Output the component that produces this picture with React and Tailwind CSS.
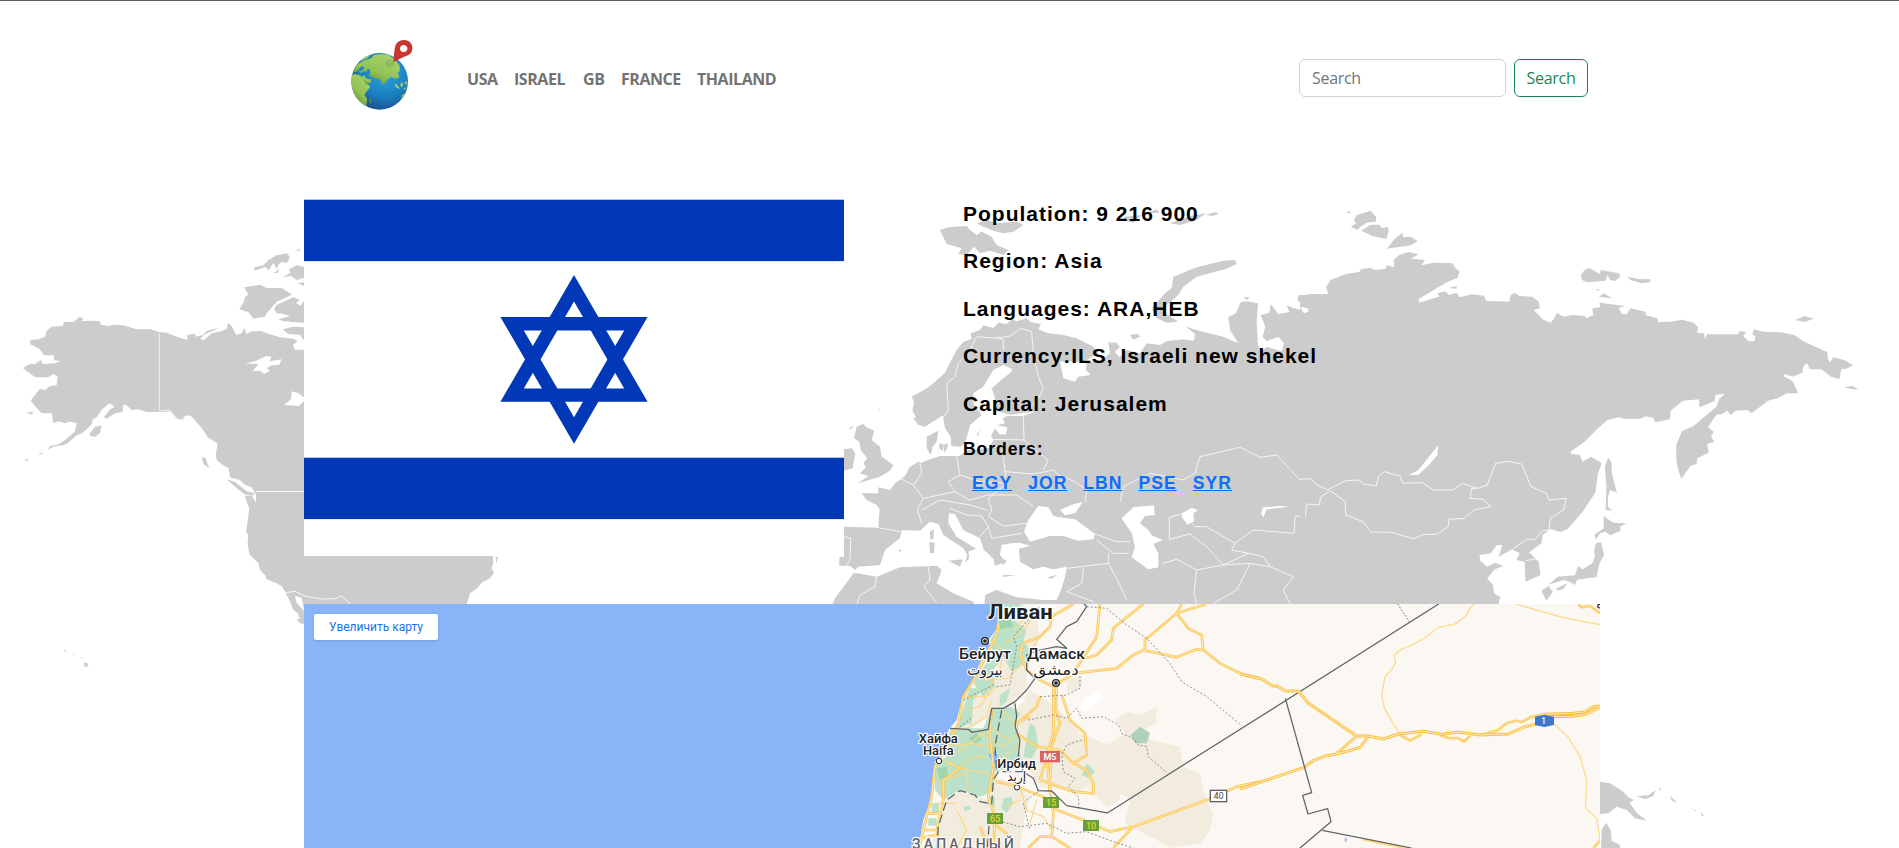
import React from "react";

const navLinks = [
  { label: "USA", width: "w-[31px]" },
  { label: "ISRAEL", width: "w-[53px]" },
  { label: "GB", width: "w-[22px]" },
  { label: "FRANCE", width: "w-[60px]" },
  { label: "THAILAND", width: "w-[82px]" },
];

const facts = [
  "Population: 9 216 900",
  "Region: Asia",
  "Languages: ARA,HEB",
  "Currency:ILS, Israeli new shekel",
  "Capital: Jerusalem",
];

const borders = ["EGY", "JOR", "LBN", "PSE", "SYR"];

function Logo() {
  return (
    <svg className="h-[70px] w-[62px]" viewBox="0 0 186 210">
      <defs>
        <radialGradient id="sea" cx="0.6" cy="0.35" r="0.7">
          <stop offset="0" stopColor="#2ba3dc" />
          <stop offset="0.6" stopColor="#1a80bf" />
          <stop offset="1" stopColor="#1c4a8c" />
        </radialGradient>
        <linearGradient id="land" x1="0.7" y1="0" x2="0.1" y2="1">
          <stop offset="0" stopColor="#a9d268" />
          <stop offset="0.5" stopColor="#93c257" />
          <stop offset="1" stopColor="#4d8a2c" />
        </linearGradient>
        <clipPath id="globe">
          <circle cx="86" cy="124" r="85" />
        </clipPath>
      </defs>
      <circle cx="86" cy="124" r="85" fill="url(#sea)" />
      <g clipPath="url(#globe)">
        <g fill="url(#land)">
          <path d="M0 106 L12 102 26 106 36 118 44 130 54 136 58 140 46 156 40 164 48 176 46 202 20 190 0 150Z" />
          <path d="M30 110 L40 106 44 114 52 118 62 118 58 128 44 132Z" />
          <path d="M6 88 L16 76 30 66 44 60 62 54 66 46 90 42 112 44 126 54 136 64 146 78 146 94 140 98 146 112 132 116 120 110 110 118 98 136 90 124 84 116 70 114 56 108 48 96 38 94 30 100 20 92 10 98Z" />
          <path d="M30 62 L46 46 62 42 50 54 36 62Z M150 182 L152 166 164 158 170 146 178 150 172 176 156 188Z" />
          <path d="M130 130 L140 136 148 148 134 142Z M148 132 L154 126 156 138 150 142Z M160 128 L168 122 166 136Z M158 144 l8 -2 -4 8Z M56 178 L61 176 60 192 56 190Z" />
        </g>
        <path d="M50 86 l6 2 2 12 -6 6 -6 -10Z M34 78 l6 4 -6 10 -14 2 6 -10Z M22 96 l10 4 -4 4 -12 0Z" fill="#1e86c6" />
        <ellipse cx="116" cy="70" rx="14" ry="12" fill="#628d42" opacity="0.25" />
      </g>
      <path
        fillRule="evenodd"
        fill="#c8352f"
        d="M127 67 C129 48 129 28 134 15 C141 0 159 -3 172 3 C186 11 187 28 179 40 C171 49 153 51 142 59Z M158 15 a11 11 0 1 0 0.1 0Z"
      />
    </svg>
  );
}

function Flag() {
  return (
    <svg className="block h-[393px] w-[540px]" viewBox="0 0 540 393">
      <rect width="540" height="393" fill="#fff" />
      <g fill="#0038b8">
        <rect y="36.7" width="540" height="61.4" />
        <rect y="294.7" width="540" height="61.4" />
        <path
          fillRule="evenodd"
          d="M270 112 L343.6 238.8 L196.4 238.8Z M270 138.6 L320.2 225.4 L219.8 225.4Z"
        />
        <path
          fillRule="evenodd"
          d="M270 280.8 L343.6 154 L196.4 154Z M270 254.2 L320.2 167.4 L219.8 167.4Z"
        />
      </g>
    </svg>
  );
}

function WorldMap() {
  return (
    <svg
      className="absolute inset-0 -z-10 h-[848px] w-[1899px]"
      viewBox="0 0 1899 848"
      fill="#ccc"
      aria-hidden="true"
    >
      {/* North America */}
      <g transform="translate(0 199) scale(.33333)">
        <path d="M90 432 L92 420 115 418 135 410 140 392 155 380 188 378 192 366 220 366 240 350 250 358 245 364 268 362 300 364 303 374 325 378 345 374 370 376 410 388 450 387 478 396 500 398 530 410 562 420 562 404 585 402 588 410 606 406 622 392 655 384 640 392 612 404 600 418 612 420 635 400 665 394 680 386 684 370 695 377 708 404 722 402 735 384 738 402 755 394 785 393 800 400 840 412 880 416 893 424 878 436 885 449 912 449 1490 449 1490 1070 1478 1060 1480 1090 1475 1105 1482 1119 1467 1137 1448 1146 1428 1168 1410 1180 1395 1230 912 1230 905 1193 885 1188 890 1208 912 1232 912 1272 900 1270 890 1258 900 1256 893 1240 880 1230 870 1204 855 1175 845 1158 830 1150 800 1138 795 1125 780 1110 775 1090 748 1062 743 1030 745 1004 738 995 745 950 748 925 740 905 735 888 755 886 768 908 768 884 755 862 735 855 720 840 690 832 686 805 668 795 650 780 648 765 652 730 625 716 605 684 572 648 555 648 548 660 530 656 510 634 480 636 440 636 415 628 395 630 380 616 370 614 368 636 345 640 320 656 312 652 328 630 344 620 328 610 305 630 290 652 278 658 276 672 258 690 245 700 230 706 205 728 190 736 165 738 143 750 150 738 178 732 210 708 225 694 230 668 205 665 195 670 175 664 160 670 155 640 125 640 105 618 92 602 105 585 120 566 135 570 150 558 170 556 173 530 160 522 145 532 105 532 88 518 68 504 90 492 105 492 122 480 128 492 165 490 180 484 162 480 162 466 132 466 118 446Z" />
        <path d="M762 202 L790 196 805 180 830 166 860 160 870 170 862 188 845 186 835 194 830 208 820 188 805 212 798 200 765 212Z M820 220 L838 206 834 218Z M848 232 L872 218 866 208 890 196 912 200 912 234 890 240 872 228Z M886 150 l12 -2 4 6Z M893 250 l19 -4 v12Z" />
        <path d="M733 262 L782 254 800 264 845 264 876 284 830 306 800 340 795 350 760 356 745 336 718 328 732 305 735 290 745 284Z M822 328 L830 314 880 292 900 300 888 308 900 318 912 302 912 368 850 364 835 358 870 348 850 342 830 340Z M848 388 L880 380 912 382 912 422 900 404 865 402Z" />
        <path d="M270 700 L285 680 305 676 300 700 285 710 270 708Z M78 636 h24 l-8 8Z M605 774 L615 772 628 804 612 794Z M680 838 L705 846 740 874 760 878 765 886 735 884 700 856Z M75 780 l12 -6 -8 12Z M115 762 l18 -6 -12 8Z M252 1386 l14 6 -6 9 -8 -2Z M190 1350 h8 v6Z M215 1362 h8 v4Z M242 1372 h5 v5Z M1487 1071 h7 l-5 20Z" />
        <g fill="#fff">
          <path d="M735 490 L765 484 800 468 815 470 808 484 845 478 838 494 815 496 800 504 810 512 792 522 780 512 758 514 775 492Z M853 614 L873 598 875 574 895 580 912 592 912 604 896 618Z M560 665 l14 8 -4 16Z M585 684 l6 12 -8 8Z M600 714 l18 12 -10 6Z M556 684 l18 20 -2 8Z M586 720 l14 18 -6 2Z" />
        </g>
        <g fill="none" stroke="#fff" strokeWidth="2.6">
          <path d="M478 398 V632 L508 630 538 662 560 646 575 650 625 714 648 728 652 750" opacity=".8" />
          <path d="M768 874.5 H912 M855 1178 L885 1174 915 1188 960 1197 1005 1196 1025 1188 1050 1212" />
        </g>
      </g>
      {/* Europe, western Asia and northern Africa */}
      <g transform="translate(830 179) scale(.33333)">
        <path d="M1500 341 L1405 346 1403 362 1432 380 1430 394 1390 384 1370 376 1378 396 1345 402 1322 372 1318 398 1292 406 1306 440 1298 470 1310 484 1345 470 1362 490 1355 514 1310 500 1296 512 1284 495 1280 430 1284 370 1250 364 1232 366 1218 400 1195 412 1200 450 1225 490 1180 470 1090 448 1065 438 1095 462 1092 482 1060 478 1010 484 990 495 950 490 930 520 890 510 868 532 855 515 870 500 860 488 835 487 840 520 810 545 770 545 768 570 782 585 745 590 735 605 700 595 690 545 760 545 805 520 790 500 740 475 700 465 655 460 625 448 633 432 602 426 590 415 560 424 545 418 530 432 505 428 490 444 460 436 450 450 422 460 425 476 400 486 380 510 360 548 345 578 330 592 300 618 282 630 245 650 253 668 247 690 258 712 250 715 265 735 285 740 325 715 338 706 345 745 362 770 364 798 390 800 405 790 415 755 420 735 455 705 430 670 430 640 460 620 490 570 520 555 548 568 540 580 520 595 485 625 495 655 490 690 540 704 620 694 580 708 530 708 518 716 525 730 500 736 532 742 528 762 510 764 495 745 483 768 490 780 475 805 415 810 388 828 350 828 330 828 300 838 270 850 268 844 240 860 225 888 195 910 180 930 145 922 145 940 95 940 110 960 140 975 149 988 145 1043 42 1040 42 1131 28 1131 28 1157 60 1157 75 1170 85 1160 150 1155 165 1110 210 1075 215 1050 270 1052 300 1025 325 1032 340 1065 400 1105 412 1125 405 1150 418 1135 415 1115 438 1106 380 1070 355 1030 357 1000 375 1002 400 1050 450 1075 462 1110 490 1135 495 1158 525 1145 510 1125 515 1095 545 1090 570 1088 600 1098 567 1106 570 1145 610 1168 640 1160 670 1168 710 1160 705 1190 695 1225 680 1260 640 1260 560 1252 500 1230 465 1245 462 1290 1500 1290Z" />
        <path d="M82 1180 L140 1190 210 1162 320 1157 335 1170 320 1210 370 1240 430 1265 440 1290 0 1290 15 1255 45 1215 70 1180Z" />
        <path d="M290 770 L325 752 320 785 308 800 302 825 290 805Z M328 790 l14 4 -4 18 -10 -6Z M342 794 l12 -4 -2 14 -10 16Z M80 740 L100 732 110 742 133 752 125 780 150 800 155 830 190 855 180 872 150 890 84 910 115 888 90 880 108 862 100 850 112 835 92 810 88 785 72 775Z M42 808 L65 805 76 820 68 865 42 872Z M300 1055 l12 -8 -2 30 -10 0Z M298 1086 l16 2 -2 30 -12 2Z M355 1142 L398 1138 390 1160Z M520 1184 l38 2 -38 5Z M652 1192 l30 -8 -18 12Z M205 1108 l10 2 -6 6Z M480 1130 l50 10 -8 14Z M440 765 l10 -18 -6 22Z M145 688 l4 -4 -2 10Z M58 744 l14 -8 -12 14Z" />
        <path d="M330 150 L355 142 410 138 420 150 440 165 455 155 485 170 500 195 535 210 520 225 480 212 450 220 432 200 410 225 385 222 395 205 350 192Z M440 130 L470 120 500 130 560 125 580 135 550 155 520 160 490 152 460 140Z M885 110 L935 105 910 128 880 122Z M950 100 l30 -12 10 10Z M1020 130 L1080 108 1130 100 1095 122 1050 135Z M1128 104 l30 -8 8 6 -20 6Z" />
        <path d="M965 385 L1005 340 1025 325 1030 290 1100 262 1180 242 1215 240 1220 252 1190 266 1100 290 1060 320 1045 345 1010 375 1005 400 1045 425 1010 428 980 415Z M900 465 l20 -4 12 8 -22 10Z M1240 352 l20 0 -10 8Z" />
        <g fill="#fff">
          <path d="M582 1055 L595 1020 625 978 655 982 670 1008 690 1012 735 1018 795 1062 790 1078 745 1082 700 1068 660 1068 600 1085Z M690 990 L725 974 758 966 735 1000 705 1006Z M875 1015 L910 982 972 976 974 1005 945 1008 930 1030 955 1050 965 1066 998 1080 970 1092 985 1120 985 1162 955 1168 905 1132 915 1100 905 1060Z M1056 1000 l28 -16 20 6 -14 10 2 24 -20 10 -16 -22Z M1293 1000 L1300 982 1350 978 1378 980 1345 984 1310 988 1300 1012Z" />
        </g>
        <g fill="none" stroke="#fff" strokeWidth="2.4" strokeLinejoin="round">
          <path d="M340 712 L355 690 350 610 375 590 385 550 420 510 440 470 500 475 540 468 575 445 605 455 610 520 625 590 640 625 620 665 580 695 M520 510 L520 480 500 470" />
          <path d="M270 850 L275 880 250 915 280 955 262 990 275 1030 M195 888 L250 915 M380 830 L390 885 355 905 375 935 280 955 M390 885 L450 905 530 910 M520 830 L525 875 530 910 475 955 485 990 475 1010 520 1038 590 1030 M525 875 L610 882 670 870 685 885 735 905 770 930 765 965 M580 710 L582 780 490 778 M582 780 L615 810 655 840 M655 840 L640 870 M375 935 L420 960 475 945 560 945 610 980 M275 990 L330 960 420 975 470 990 M360 985 L410 1005 455 1008 475 1040 450 1070 M475 1040 L485 1075 575 1060 M42 1070 L62 1075 60 1140 50 1156" />
          <path d="M145 1043 L210 1055 M870 965 L880 920 960 880 1060 900 1095 880 1110 830 1230 802 1290 832 1340 825 1410 900 1450 895 1492 928 1475 965 1435 975 1432 1005 1395 1010 1392 1060 1270 1050 1215 1090 1180 1070 1130 1040 1095 1040 1060 1000 1018 1012 1018 1078 1080 1062 1130 1100 1180 1155 1255 1120 1205 1110 1215 1090" />
          <path d="M998 1150 L1040 1138 1100 1170 1092 1240 1100 1270 M1100 1170 L1180 1155 1260 1150 1220 1230 1150 1270 M1260 1150 L1320 1160 1390 1190 1360 1230 1380 1270 M1255 1120 L1300 1130 1320 1160 M790 1060 L860 1085 900 1085 M800 1080 L850 1120 895 1120 M835 1120 L835 1150 710 1165 M835 1150 L865 1205 890 1260 M760 1165 L755 1210 710 1235 790 1265 M140 1190 L135 1220 90 1245 80 1275 M295 1160 L300 1200 282 1220 320 1268" />
        </g>
      </g>
      {/* Siberia and eastern Asia */}
      <g transform="translate(1300 179) scale(.382 .33333)">
        <path d="M0 347 L30 342 75 343 68 322 80 300 120 282 155 276 160 268 185 263 195 270 225 266 227 256 247 262 245 240 260 224 285 216 310 223 290 236 327 240 318 256 350 248 400 250 405 262 418 275 412 294 385 306 350 330 310 358 312 368 340 358 365 350 360 340 380 334 390 345 410 338 418 352 450 343 482 347 487 362 548 365 552 345 562 338 575 348 608 350 625 365 628 385 612 390 635 418 655 428 664 418 673 398 690 410 715 405 745 408 750 415 768 405 765 385 785 382 785 368 850 378 835 384 842 402 855 403 865 385 905 395 905 405 935 415 938 426 970 425 1000 419 1030 428 1042 442 1040 458 1058 460 1060 478 1066 463 1145 463 1152 453 1168 456 1160 468 1175 484 1190 484 1192 470 1184 462 1188 448 1215 455 1260 457 1295 466 1320 485 1380 516 1382 538 1388 547 1396 532 1425 540 1448 556 1430 566 1417 567 1412 598 1390 590 1365 568 1335 568 1328 550 1318 558 1315 578 1290 590 1270 582 1265 588 1290 604 1304 640 1275 640 1250 655 1225 662 1182 700 1172 690 1140 692 1128 705 1118 692 1105 702 1090 704 1068 742 1083 755 1076 770 1085 785 1066 792 1070 818 1040 835 1038 852 1022 858 998 897 990 870 985 840 985 795 1000 754 1030 738 1090 680 1098 656 1112 642 1088 644 1085 664 1045 682 1045 658 1003 662 970 692 968 718 930 727 925 713 905 709 890 716 850 717 835 712 805 720 780 745 745 785 708 815 710 822 732 824 740 845 762 830 790 850 780 880 773 938 740 995 700 1048 682 1056 655 1047 635 1065 632 1090 600 1117 625 1145 630 1185 590 1205 588 1145 567 1140 575 1120 555 1108 520 1130 530 1095 515 1095 500 1120 470 1125 472 1142 490 1160 510 1148 533 1158 510 1168 490 1195 505 1215 508 1240 525 1252 520 1268 525 1290 0 1290Z" />
        <path d="M148 105 L185 92 200 112 198 125 175 128 158 140 150 150 133 140 148 130 140 122Z M160 152 L185 134 208 134 215 145 230 140 232 155 226 177 190 168Z M228 206 L248 176 268 158 270 172 290 170 308 184 290 196Z M118 97 l12 -3 3 6Z M735 285 L745 270 758 264 785 282 787 270 805 274 835 280 838 290 825 303 812 300 805 285 800 302 752 307 738 300Z M857 290 L890 298 915 297 918 306 895 310 865 300Z M775 328 l10 0 -6 5Z M782 350 L795 340 818 355Z M390 324 l20 -6 0 8Z M1296 420 L1320 408 1345 416 1320 426Z M1425 622 L1445 618 1463 628 1445 628Z" />
        <path d="M798 860 L807 832 816 850 816 880 830 938 812 930 806 950 806 980 818 992 800 990 802 920Z M795 1008 L820 1028 855 1030 838 1040 840 1052 812 1066 800 1055 785 1060 775 1078 770 1064 795 1045Z M770 1110 L775 1090 788 1086 796 1125 784 1150 776 1192 750 1195 725 1200 720 1215 705 1205 690 1200 650 1214 675 1190 720 1186 728 1158 740 1168 765 1150 772 1130Z M632 1232 L650 1218 662 1235 645 1262Z M670 1226 L700 1210 690 1226 675 1232Z" />
        <path d="M0 380 L20 385 22 395 10 400Z M284 886 L310 870 345 820 362 795 360 825 335 858 310 884Z" fill="#fff" />
        <g fill="none" stroke="#fff" strokeWidth="2.3" strokeLinejoin="round">
          <path d="M0 898 L28 896 45 915 72 930 120 902 155 900 165 912 200 918 205 890 220 875 262 888 270 910 320 908 350 930 400 930 425 910 465 925 490 915 512 850 545 844 580 852 605 920 645 940 652 960 697 955 690 990 655 1015 652 1050 635 1052 615 1078 595 1078 558 1106 M465 925 L450 925 445 955 480 958 500 980 455 990 430 1015 390 1018 388 1040 360 1062 320 1064 298 1077 240 1057 185 1056 165 1025 120 1005 118 965 80 932 55 950 50 975 18 972 14 1010 M590 1142 L620 1136" />
        </g>
      </g>
      {/* New Guinea, Australia and the Pacific islands */}
      <g transform="translate(1240 599) scale(.33333)">
        <path d="M1080 545 L1110 550 1150 575 1165 592 1182 600 1168 608 1190 638 1220 662 1185 655 1160 630 1130 620 1105 640 1080 642Z M1190 588 L1225 586 1248 570 1240 588 1215 598Z M1254 558 l10 12 -4 2Z M1290 588 l16 14 2 8 -14 -10Z M1346 620 l22 12 -2 2Z M1380 632 l12 16 -6 0Z M1364 648 l16 6Z M1396 662 l12 6Z M1318 606 l10 6Z M1083 750 L1085 690 1098 668 1112 690 1115 722 1140 735 1140 750Z" />
      </g>
    </svg>
  );
}

const westRoads = [
  "M118 744 L130 690 155 590 165 500 180 475 235 370 250 290 290 225 350 105 355 70",
  "M178 744 L170 690 190 600 190 540 240 505 200 485",
  "M140 640 H180 M125 690 L165 690 M120 715 L165 705",
  "M340 744 L345 650 325 590 340 500 330 400 335 330",
  "M395 744 L380 700 340 670 M300 680 L325 744",
  "M445 744 L480 710 515 710 570 744 M515 710 L520 640 510 570 500 470 520 400 520 260",
  "M530 260 L528 330 540 370 515 440 508 570",
  "M545 285 L570 360 615 400 620 465 580 490 540 450 470 440 410 400 410 370 450 350",
  "M480 290 L470 320 410 370 M480 540 L500 470 M480 540 L580 575 640 580 640 550 620 510 580 490",
  "M345 545 L400 555 450 575 490 590 530 630 610 660 690 695 760 680 980 600 1070 560 1140 545",
  "M700 744 L755 685",
  "M480 240 L520 260 580 220 710 205 760 165 790 150 890 172 950 148 970 150 1020 190 1085 222 1140 235",
  "M795 150 V120 L890 40 L980 12 M890 40 L905 12 M890 40 L925 85 965 105 970 150",
  "M580 220 L650 110 660 12 M600 180 L650 165 695 120 700 85 790 12",
  "M430 130 L480 110 510 80 515 50 580 12 M430 130 L420 160 440 210 480 240",
];

const eastHighways =
  "M0 222 L65 237 97 257 113 259 138 273 175 273 205 310 265 350 350 408 383 408 430 417 475 402 550 394 605 403 655 396 720 405 805 402 855 380 900 370 M0 567 L190 503 220 482 260 467 285 463 315 440 350 408 M285 463 L325 453 360 442 383 412 M910 343 L1000 340 1035 335 1060 320 1080 318 M910 350 L1000 349 1040 342 1080 322";

const eastBranches =
  "M475 402 L510 422 545 403 M600 405 L630 415 655 415 672 425 690 408 M720 405 L770 392 800 370 830 362 845 367 870 352 910 343 M1015 12 L1025 22 1050 18 1080 40 M1060 744 L1080 722 M370 718 L500 744";

const greenAreas = [
  "M355 12 L420 12 430 30 400 60 440 90 430 120 450 150 420 200 395 215 370 170 340 210 345 260 310 290 280 250 300 215 340 160 330 120 350 90Z",
  "M270 265 L310 265 280 300 275 370 250 380 230 390 260 290Z",
  "M390 265 L360 285 358 320 380 305Z",
  "M210 385 L310 385 335 325 395 320 420 340 400 380 420 420 415 450 430 480 400 500 345 515 340 575 300 590 240 570 190 600 165 570 165 490 200 470Z",
  "M450 370 L465 380 475 440 455 475 430 470 440 410Z",
  "M620 490 L645 515 625 535 605 525Z",
  "M370 595 L395 590 400 610 380 640 365 625Z",
  "M155 610 h22 v28 h-22Z M145 655 h25 v22 h-25Z M325 590 l20 0 0 30 -25 -8Z M250 620 l20 -3 4 10 -20 6Z",
];

const roadShields = [
  { text: "M5", x: 480, y: 453, w: 60, h: 34, fill: "#db6263", color: "#fff" },
  { text: "15", x: 489, y: 591, w: 48, h: 33, fill: "#6a9f3f", color: "#f4e51b" },
  { text: "65", x: 321, y: 639, w: 48, h: 33, fill: "#6a9f3f", color: "#f4e51b" },
  { text: "10", x: 609, y: 660, w: 48, h: 33, fill: "#6a9f3f", color: "#f4e51b" },
];

const places = [
  { text: "Ливан", x: 421, y: 56, size: 63, weight: 700, width: 194 },
  { text: "Бейрут", x: 315, y: 178, size: 46, weight: 500, width: 156 },
  { text: "بيروت", x: 315, y: 224, size: 44, weight: 500, width: 106 },
  { text: "Дамаск", x: 528, y: 178, size: 46, weight: 500, width: 174 },
  { text: "دمشق", x: 528, y: 224, size: 44, weight: 500, width: 136 },
  { text: "Хайфа", x: 175, y: 428, size: 37, weight: 500, width: 117 },
  { text: "Haifa", x: 175, y: 465, size: 37, weight: 500, width: 92 },
  { text: "Ирбид", x: 410, y: 503, size: 37, weight: 500, width: 116 },
  { text: "إربد", x: 410, y: 544, size: 38, weight: 500, width: 56 },
];

function RegionMap() {
  return (
    <svg className="block h-[244px] w-[1296px]" viewBox="304 604 1296 244">
      <rect x="304" y="604" width="1296" height="244" fill="#8ab4f8" />
      <g transform="translate(880 600) scale(.33333)" strokeLinejoin="round">
        <path d="M356 0 L356 80 325 120 330 135 300 190 270 260 240 320 230 360 205 390 200 460 165 485 155 590 130 660 115 744 2160 744 2160 0Z" fill="#fbf8f3" />
        <g fill="#f2ecde">
          <path d="M360 15 L430 12 470 60 480 110 440 215 440 260 400 310 350 325 270 390 260 350 290 280 350 230Z" />
          <path d="M410 330 L450 270 500 300 545 340 590 380 610 450 620 500 640 540 600 575 480 560 440 500 420 450Z" />
          <path d="M150 744 L200 600 240 575 330 600 345 530 400 550 450 590 430 670 420 744Z" />
          <path d="M705 360 L740 335 780 345 830 320 828 370 800 385 810 420 850 430 900 440 910 500 960 520 975 590 1000 640 990 690 960 730 870 744 830 720 770 690 735 670 750 600 690 560 680 490 640 450 690 430 735 400Z" />
          <path d="M560 235 L605 230 605 265 560 280Z M600 400 L700 440 720 600 680 620 620 560Z" />
        </g>
        <g fill="#fff">
          <path d="M600 325 L620 290 640 286 650 270 662 278 665 300 645 312 630 326 610 335Z M405 290 l30 12 -20 12Z" />
        </g>
        <g fill="#bbe2c8">{greenAreas.map((d) => <path key={d} d={d} />)}</g>
        <g fill="#a0d5ab">
          <path d="M265 415 L290 400 305 420 285 430Z M170 505 L200 500 205 530 180 540Z M358 55 l30 -5 12 30 -40 8Z" />
        </g>
        <path d="M752 405 L780 380 810 400 800 430 765 430Z" fill="#b0cfbd" />
        <path d="M325 465 L345 452 355 475 348 500 335 515 338 485Z" fill="#8ab4f8" />
        <g fill="none" stroke="#fcd883" strokeWidth="3.5">
          <path d="M290 225 L320 240 380 235 430 190 480 110 M250 290 L320 290 350 260 M265 330 L300 320 320 290 340 240 M210 395 L270 380 320 350 335 300 M205 440 L270 430 330 440 M200 470 L260 440 300 405 360 385 M230 510 L280 470 325 470 M240 505 L330 520 M300 400 L370 440 415 400 M345 540 L340 500 420 430 M345 400 L390 420 M365 330 L405 370 M190 540 L260 520 265 570 M160 610 L230 610 M230 630 L260 690 230 744 M375 130 L420 100 470 40 M400 90 L430 60 M360 210 L370 150 340 130 M420 560 L440 630 490 650 515 690 M470 600 L450 670 M380 620 L420 600" />
        </g>
        <g fill="none" stroke="#fbc652" strokeWidth="8">{westRoads.map((d) => <path key={d} d={d} />)}</g>
        <g fill="none" stroke="#fee9b5" strokeWidth="3">{westRoads.map((d) => <path key={d} d={d} />)}</g>
        <g fill="none" stroke="#73757a" strokeWidth="2.4" strokeDasharray="6 6">
          <path d="M620 20 L680 25 740 75 800 115 870 190 905 245 980 290 1085 377" />
          <path d="M445 360 L520 345 560 355 590 325 605 355 670 350 715 375 725 400 760 415 775 435 800 440 805 470 860 518" />
          <path d="M605 420 L560 435 545 465 550 515 585 535 565 560 595 590 597 625" />
          <path d="M350 260 L390 255 410 140 400 110 480 20 M480 290 L560 285 600 265 600 225 M440 600 L480 570 M345 660 L420 680 500 670 560 700 620 695 700 725 760 744 M430 610 L450 690 M250 300 L330 260 345 250 M240 380 L280 350" />
        </g>
        <g fill="none" stroke="#5f6368" strokeWidth="3.8">
          <path d="M210 385 L265 388 275 397 325 388 335 325 370 325 405 305 440 270 465 235 440 210 440 165 480 150 530 140 560 145 530 118 560 80 590 65 620 20 612 12" />
          <path d="M405 310 L410 350 405 380 420 420 415 470 430 515 460 535 475 572 515 573 560 617 682 639 1676 12" />
          <path d="M170 744 L175 680 200 600 240 572 285 585 300 605 335 612 340 540 355 515 430 515" strokeDasharray="26 12" />
          <path d="M365 330 L345 440 350 510 M330 640 L322 744" strokeDasharray="26 12" />
        </g>
      </g>
      <g transform="translate(1240 600) scale(.33333)" fill="none" strokeLinejoin="round">
        <g stroke="#fcd883" strokeWidth="3.5">
          <path d="M703 12 L685 30 678 48 645 72 595 82 560 110 510 138 485 147 462 165 467 185 458 205 435 230 425 285 433 325 480 405" />
          <path d="M828 12 L970 53 1080 74 M940 370 L985 412 1020 470 1040 540 1037 625 1070 655 1080 720" />
        </g>
        <path d={eastBranches} stroke="#fbc652" strokeWidth="7.5" />
        <path d={eastBranches} stroke="#fee9b5" strokeWidth="2.4" />
        <path d={eastHighways} stroke="#fabf40" strokeWidth="9" />
        <path d={eastHighways} stroke="#fee9b5" strokeWidth="3.2" />
        <path d="M136 295 L215 578 188 586 204 642 263 626 273 665 180 744 M247 691 L515 744" stroke="#5f6368" strokeWidth="3.8" />
        <path d="M473 12 L508 65" stroke="#73757a" strokeWidth="3" strokeDasharray="5 5" />
        <path d="M314 712 l7 6 -3 8 -4 -3Z" fill="#8ab4f8" />
        <path d="M885 350 L913 344 942 350 V375 L913 381 885 375Z" fill="#3c78cc" />
        <text x="911" y="372" fill="#fff" fontSize="25" fontWeight="500" textAnchor="middle" fontFamily="Roboto, sans-serif">1</text>
        <path d="M1080 14 a5 5 0 1 0 0 9" stroke="#202124" strokeWidth="3.5" />
      </g>
      <g transform="translate(880 600) scale(.33333)" fontFamily="Roboto, 'DejaVu Sans', sans-serif" textAnchor="middle">
        {roadShields.map((s) => (
          <g key={s.text}>
            <rect x={s.x} y={s.y} width={s.w} height={s.h} fill={s.fill} />
            <text x={s.x + s.w / 2} y={s.y + 26} fontSize="27" fontWeight={s.text === "M5" ? 700 : 400} fill={s.color}>{s.text}</text>
          </g>
        ))}
        <rect x="991" y="571" width="49" height="34" fill="#fff" stroke="#5f6368" strokeWidth="4" />
        <text x="1016" y="597" fontSize="26" fill="#3c4043">40</text>
        <g stroke="#202124" strokeWidth="4">
          <circle cx="315" cy="123" r="10" fill="#eee" />
          <circle cx="528" cy="249" r="10" fill="#eee" />
          <circle cx="177" cy="483" r="8" fill="#fff" strokeWidth="3" />
          <circle cx="411" cy="562" r="8" fill="#fff" strokeWidth="3" />
        </g>
        <circle cx="315" cy="123" r="5.5" fill="#202124" />
        <circle cx="528" cy="249" r="5.5" fill="#202124" />
        {places.map((p) => (
          <text
            key={p.text}
            x={p.x}
            y={p.y}
            fontSize={p.size}
            fontWeight={p.weight}
            textLength={p.width}
            lengthAdjust="spacingAndGlyphs"
            fill="#202124"
            stroke="#fff"
            strokeWidth="7"
            strokeLinejoin="round"
            paintOrder="stroke"
          >
            {p.text}
          </text>
        ))}
        <text x="249" y="746" fontSize="42" fontWeight="500" textLength="306" fill="#5f6368" stroke="#fff" strokeWidth="7" paintOrder="stroke">ЗАПАДНЫЙ</text>
      </g>
    </svg>
  );
}

export default function App() {
  return (
    <div className="relative isolate h-[848px] w-[1899px] overflow-hidden border-t border-[#5f5f63] bg-white font-['Open_Sans','Noto_Sans',sans-serif]">
      <WorldMap />
      <div className="ml-[304px] w-[1296px]">
        <header className="flex h-[155px] items-center pr-3 pl-[47px]">
          <div className="-mt-[7px]">
            <Logo />
          </div>
          <nav className="ml-[54px] flex gap-4 text-[16px] font-bold text-[#737373]">
            {navLinks.map((link) => (
              <a key={link.label} href="#" className={`${link.width} tracking-[-0.45px] whitespace-nowrap`}>
                {link.label}
              </a>
            ))}
          </nav>
          <form className="-mt-px ml-auto flex gap-2">
            <input
              type="text"
              placeholder="Search"
              className="h-[38px] w-[207px] rounded-md border border-[#ced4da] bg-white px-3 text-[16px] tracking-[-0.3px] placeholder:text-[#6c757d]"
            />
            <button
              type="button"
              className="h-[38px] w-[74px] rounded-md border border-[#198754] text-[16px] tracking-[-0.3px] text-[#198754]"
            >
              Search
            </button>
          </form>
        </header>
        <main>
          <section className="flex h-[448px] pt-[7px]">
            <Flag />
            <div className="ml-[119px] pt-[39px] font-['Liberation_Sans',Arial,sans-serif] font-bold text-black">
              {facts.map((fact) => (
                <p key={fact} className="mb-[23.4px] text-[21px] leading-6 tracking-[1px] whitespace-nowrap">
                  {fact}
                </p>
              ))}
              <p className="text-[17.6px] leading-[21px] tracking-[0.9px]">Borders:</p>
              <ul className="mt-[13px] ml-[9px] flex gap-4 text-[17.6px] leading-[21px] tracking-[1px] text-[#0d6efd]">
                {borders.map((code) => (
                  <li key={code}>
                    <a href="#" className="underline">{code}</a>
                  </li>
                ))}
              </ul>
            </div>
          </section>
          <section className="relative">
            <RegionMap />
            <a
              href="#"
              className="absolute top-[10px] left-[10px] flex h-[26px] w-[124px] items-center justify-center rounded-xs bg-white font-[Roboto,sans-serif] text-[12px] text-[#1a73e8] shadow-sm"
            >
              Увеличить карту
            </a>
          </section>
        </main>
      </div>
    </div>
  );
}
